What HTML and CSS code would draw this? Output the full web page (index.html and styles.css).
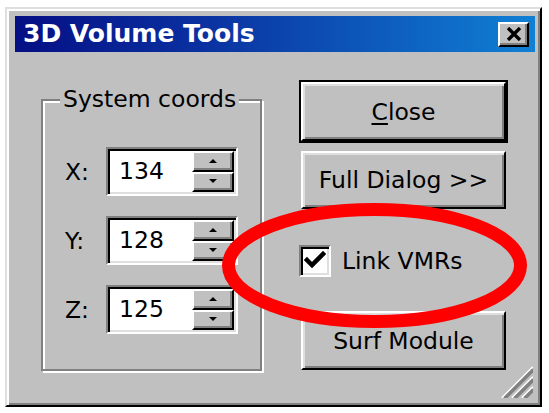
FILE: index.html
```html
<!DOCTYPE html>
<html>
<head>
<meta charset="utf-8">
<link rel="stylesheet" href="styles.css">
</head>
<body>
<div class="window">
  <div class="titlebar">
    <span class="title">3D Volume Tools</span>
    <div class="tb-close">
      <svg width="16" height="14" viewBox="0 0 16 14"><path d="M2 1 L14 13 M14 1 L2 13" stroke="#000" stroke-width="3.4" fill="none"/></svg>
    </div>
  </div>
  <div class="content">
    <div class="group">
      <div class="legend">System coords</div>
      <div class="rows">
        <div class="row">
          <span class="lbl">X:</span>
          <div class="spin">
            <div class="field">134</div>
            <div class="arrows">
              <div class="arr up"><i></i></div>
              <div class="arr down"><i></i></div>
            </div>
          </div>
        </div>
        <div class="row">
          <span class="lbl">Y:</span>
          <div class="spin">
            <div class="field">128</div>
            <div class="arrows">
              <div class="arr up"><i></i></div>
              <div class="arr down"><i></i></div>
            </div>
          </div>
        </div>
        <div class="row">
          <span class="lbl">Z:</span>
          <div class="spin">
            <div class="field">125</div>
            <div class="arrows">
              <div class="arr up"><i></i></div>
              <div class="arr down"><i></i></div>
            </div>
          </div>
        </div>
      </div>
    </div>
    <div class="actions">
      <div class="btn default"><div class="face"><span><u>C</u>lose</span></div></div>
      <div class="btn plain"><span>Full Dialog &gt;&gt;</span></div>
      <div class="check">
        <span class="box"><svg width="22" height="20" viewBox="0 0 22 20"><path d="M3 9 L8 14 L19 3" stroke="#000" stroke-width="4.5" fill="none" stroke-linecap="square"/></svg></span>
        <span class="check-label">Link VMRs</span>
      </div>
      <div class="btn plain last"><span>Surf Module</span></div>
    </div>
  </div>
  <svg class="grip" width="32" height="32" viewBox="0 0 32 32">
    <g stroke-width="2.2">
      <path d="M1 32 L32 1" stroke="#fff"/>
      <path d="M3 32 L32 3" stroke="#808080"/>
      <path d="M5 32 L32 5" stroke="#808080"/>
      <path d="M11 32 L32 11" stroke="#fff"/>
      <path d="M13 32 L32 13" stroke="#808080"/>
      <path d="M15 32 L32 15" stroke="#808080"/>
      <path d="M21 32 L32 21" stroke="#fff"/>
      <path d="M23 32 L32 23" stroke="#808080"/>
      <path d="M25 32 L32 25" stroke="#808080"/>
    </g>
  </svg>
</div>
<svg class="annot" width="549" height="413" viewBox="0 0 549 413">
  <ellipse cx="374.5" cy="265.5" rx="146" ry="56" fill="none" stroke="#ff0000" stroke-width="13"/>
</svg>
</body>
</html>
```

FILE: styles.css
```css
html, body {
  margin: 0;
  padding: 0;
  background: #ffffff;
}
body {
  width: 549px;
  height: 413px;
  position: relative;
  overflow: hidden;
  font-family: "DejaVu Sans", "Liberation Sans", sans-serif;
  font-size: 23.5px;
  color: #000;
}
.window {
  position: absolute;
  left: 5px;
  top: 7px;
  width: 537px;
  height: 400px;
  box-sizing: border-box;
  background: #c0c0c0;
  border-style: solid;
  border-width: 2px;
  border-color: #dfdfdf #000 #000 #dfdfdf;
  box-shadow: inset 2px 2px 0 #fff, inset -2px -2px 0 #808080;
  padding: 7px 5px 0 8px;
}
.titlebar {
  height: 36px;
  display: flex;
  align-items: center;
  justify-content: space-between;
  background: linear-gradient(to right, #050f84 0%, #0a30a0 35%, #1080d4 100%);
}
.title {
  color: #fff;
  font-weight: bold;
  font-size: 25px;
  padding-left: 8px;
  line-height: 36px;
}
.tb-close {
  width: 31px;
  height: 25px;
  box-sizing: border-box;
  margin-right: 6px;
  background: #c0c0c0;
  border-style: solid;
  border-width: 2px;
  border-color: #fff #000 #000 #fff;
  box-shadow: inset -2px -2px 0 #808080;
  display: flex;
  align-items: center;
  justify-content: center;
}
.tb-close svg { display: block; margin-top: -1px; }

.content {
  display: flex;
  align-items: flex-start;
}
.group {
  margin-top: 47px;
  margin-left: 26px;
  width: 221px;
  height: 272px;
  box-sizing: border-box;
  border: 2px solid #808080;
  box-shadow: inset 2px 2px 0 #fff, 2px 2px 0 #fff;
  display: flex;
  flex-direction: column;
  align-items: flex-start;
}
.legend {
  margin-top: -16px;
  margin-left: 17px;
  padding: 0 3px;
  background: #c0c0c0;
  line-height: 28px;
  white-space: nowrap;
}
.rows {
  margin-top: 34px;
  margin-left: 22px;
  display: flex;
  flex-direction: column;
  gap: 20px;
}
.row {
  display: flex;
  align-items: center;
}
.lbl {
  width: 41px;
  line-height: 28px;
}
.spin {
  width: 132px;
  height: 49px;
  box-sizing: border-box;
  border-style: solid;
  border-width: 2px;
  border-color: #808080 #fff #fff #808080;
  box-shadow: inset 2px 2px 0 #000, inset -2px -2px 0 #dfdfdf;
  background: #fff;
  padding: 2px;
  display: flex;
}
.field {
  flex: 1;
  padding-left: 9px;
  line-height: 41px;
  background: #fff;
}
.arrows {
  width: 42px;
  display: flex;
  flex-direction: column;
}
.arr {
  flex: 1;
  box-sizing: border-box;
  background: #c0c0c0;
  border-style: solid;
  border-width: 2px;
  border-color: #fff #000 #000 #fff;
  box-shadow: inset -2px -2px 0 #808080;
  display: flex;
  align-items: center;
  justify-content: center;
}
.arr i {
  display: block;
  width: 0;
  height: 0;
  border-left: 4px solid transparent;
  border-right: 4px solid transparent;
}
.arr.up i { border-bottom: 4px solid #000; margin-top: -1px; }
.arr.down i { border-top: 4px solid #000; margin-top: -1px; }

.actions {
  margin-top: 28px;
  margin-left: 37px;
  display: flex;
  flex-direction: column;
  align-items: flex-start;
}
.btn {
  box-sizing: border-box;
  display: flex;
  align-items: center;
  justify-content: center;
  white-space: nowrap;
  background: #c0c0c0;
}
.btn.plain {
  margin-left: 2px;
  width: 205px;
  height: 58px;
  border-style: solid;
  border-width: 2px;
  border-color: #fff #000 #000 #fff;
  box-shadow: inset 2px 2px 0 #dfdfdf, inset -2px -2px 0 #808080;
  margin-top: 8px;
}
.btn.default {
  width: 209px;
  height: 63px;
  border: 2px solid #000;
}
.btn.default .face {
  width: 100%;
  height: 100%;
  box-sizing: border-box;
  display: flex;
  align-items: center;
  justify-content: center;
  border-style: solid;
  border-width: 2px;
  border-color: #fff #000 #000 #fff;
  box-shadow: inset 2px 2px 0 #dfdfdf, inset -2px -2px 0 #808080;
}
.btn u {
  text-decoration-thickness: 2px;
  text-underline-offset: 3px;
}
.btn.last {
  margin-top: 34px;
  height: 59px;
}
.check {
  margin-top: 36px;
  display: flex;
  align-items: center;
  height: 32px;
}
.box {
  width: 32px;
  height: 32px;
  box-sizing: border-box;
  border-style: solid;
  border-width: 2px;
  border-color: #808080 #fff #fff #808080;
  box-shadow: inset 2px 2px 0 #000, inset -2px -2px 0 #dfdfdf;
  background: #fff;
  display: flex;
  align-items: center;
  justify-content: center;
}
.box svg { display: block; }
.check-label {
  margin-left: 11px;
  line-height: 28px;
}
.grip {
  position: absolute;
  right: 7px;
  bottom: 7px;
}
.annot {
  position: absolute;
  left: 0;
  top: 0;
  pointer-events: none;
}
```
